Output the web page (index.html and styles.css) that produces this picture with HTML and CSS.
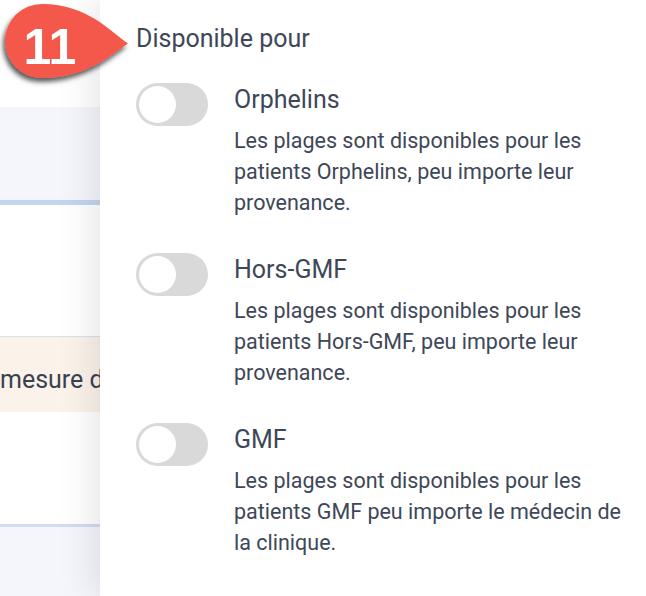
FILE: index.html
```html
<!DOCTYPE html>
<html lang="fr">
<head>
<meta charset="utf-8">
<title>Disponible pour</title>
<link rel="stylesheet" href="styles.css">
</head>
<body>
<div class="page">
  <aside class="backdrop">
    <div class="bd-top"></div>
    <div class="bd-band"></div>
    <div class="bd-white"></div>
    <div class="bd-note">mesure de la</div>
    <div class="bd-white2"></div>
    <div class="bd-band2"></div>
  </aside>
  <main class="panel">
    <h2 class="panel-title">Disponible pour</h2>
    <div class="options">
      <div class="option">
        <div class="toggle"><span class="knob"></span></div>
        <div class="option-text">
          <div class="option-name">Orphelins</div>
          <p class="option-desc">Les plages sont disponibles pour les patients Orphelins, peu importe leur provenance.</p>
        </div>
      </div>
      <div class="option">
        <div class="toggle"><span class="knob"></span></div>
        <div class="option-text">
          <div class="option-name">Hors-GMF</div>
          <p class="option-desc">Les plages sont disponibles pour les patients Hors-GMF, peu importe leur provenance.</p>
        </div>
      </div>
      <div class="option">
        <div class="toggle"><span class="knob"></span></div>
        <div class="option-text">
          <div class="option-name">GMF</div>
          <p class="option-desc">Les plages sont disponibles pour les patients GMF peu importe le médecin de la clinique.</p>
        </div>
      </div>
    </div>
  </main>
  <svg class="badge" width="140" height="95" viewBox="0 0 140 95">
    <defs>
      <filter id="sh" x="-20%" y="-20%" width="140%" height="150%">
        <feDropShadow dx="-2" dy="4" stdDeviation="2.5" flood-color="#000" flood-opacity="0.65"/>
      </filter>
    </defs>
    <path filter="url(#sh)" fill="#f4584b" d="M128 43.5 C112 33, 88 4, 42 4 A37 37 0 0 0 42 78 C88 78, 112 54, 128 43.5 Z"/>
    <text x="50" y="64" text-anchor="middle" class="badge-num">11</text>
  </svg>
</div>
</body>
</html>
```
FILE: styles.css
```css
html, body {
  margin: 0;
  padding: 0;
  background: #ffffff;
}
body {
  font-family: Roboto, "Liberation Sans", sans-serif;
  color: #3e4757;
}
.page {
  position: relative;
  display: flex;
  width: 646px;
  height: 596px;
  overflow: hidden;
}
.backdrop {
  width: 100px;
  flex: none;
  display: flex;
  flex-direction: column;
  overflow: hidden;
}
.bd-top {
  height: 107px;
  background: #ffffff;
}
.bd-band {
  height: 93px;
  background: #f4f6fb;
  border-bottom: 5px solid #c3d6ef;
}
.bd-white {
  height: 131px;
  background: #ffffff;
}
.bd-note {
  height: 65px;
  padding-top: 10px;
  border-top: 1px solid #d9e1f0;
  background: #fbf3ea;
  font-size: 25px;
  line-height: 65px;
  white-space: nowrap;
  color: #394253;
}
.bd-white2 {
  height: 112px;
  background: #ffffff;
}
.bd-band2 {
  flex: 1;
  background: #f4f6fb;
  border-top: 3px solid #d5dcf1;
}
.panel {
  flex: 1;
  position: relative;
  z-index: 1;
  background: #ffffff;
  box-shadow: -6px 0 36px rgba(0, 0, 0, 0.11);
  padding: 24px 17px 0 36px;
}
.panel-title {
  margin: 0;
  font-size: 25px;
  line-height: 30px;
  font-weight: 400;
}
.options {
  display: flex;
  flex-direction: column;
  gap: 35.5px;
  margin-top: 29px;
}
.option {
  display: flex;
  gap: 26px;
}
.toggle {
  flex: none;
  width: 72px;
  height: 43px;
  box-sizing: border-box;
  padding: 3px;
  border-radius: 22px;
  background: #d9d9d9;
  display: flex;
  align-items: center;
}
.knob {
  width: 37px;
  height: 37px;
  border-radius: 50%;
  background: #ffffff;
}
.option-text {
  flex: 1;
}
.option-name {
  font-size: 25px;
  line-height: 30px;
  margin-top: 2px;
}
.option-desc {
  margin: 9.5px 0 0;
  font-size: 21.5px;
  line-height: 31px;
}
.badge {
  position: absolute;
  left: 0;
  top: 0;
  z-index: 2;
  overflow: visible;
}
.badge-num {
  fill: #ffffff;
  font-family: "Liberation Sans", Arial, sans-serif;
  font-weight: 700;
  font-size: 50px;
}
```
